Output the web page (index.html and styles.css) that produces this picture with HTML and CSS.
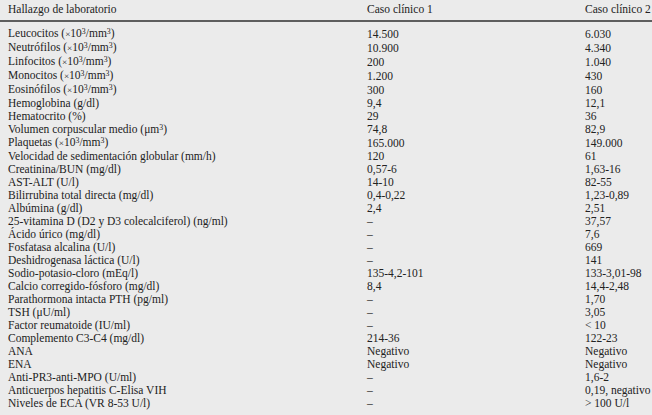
FILE: index.html
```html
<!DOCTYPE html>
<html lang="es">
<head>
<meta charset="utf-8">
<link rel="stylesheet" href="styles.css">
</head>
<body>
<table class="lab">
<colgroup><col class="c1"><col class="c2"><col class="c3"></colgroup>
<thead>
<tr><th>Hallazgo de laboratorio</th><th>Caso clínico 1</th><th>Caso clínico 2</th></tr>
</thead>
<tbody>
<tr class="first"><td>Leucocitos (<span class="x">×</span>10<sup>3</sup>/mm<sup>3</sup>)</td><td>14.500</td><td>6.030</td></tr>
<tr><td>Neutrófilos (<span class="x">×</span>10<sup>3</sup>/mm<sup>3</sup>)</td><td>10.900</td><td>4.340</td></tr>
<tr><td>Linfocitos (<span class="x">×</span>10<sup>3</sup>/mm<sup>3</sup>)</td><td>200</td><td>1.040</td></tr>
<tr><td>Monocitos (<span class="x">×</span>10<sup>3</sup>/mm<sup>3</sup>)</td><td>1.200</td><td>430</td></tr>
<tr><td>Eosinófilos (<span class="x">×</span>10<sup>3</sup>/mm<sup>3</sup>)</td><td>300</td><td>160</td></tr>
<tr><td>Hemoglobina (g/dl)</td><td>9,4</td><td>12,1</td></tr>
<tr><td>Hematocrito (%)</td><td>29</td><td>36</td></tr>
<tr><td>Volumen corpuscular medio (μm<sup>3</sup>)</td><td>74,8</td><td>82,9</td></tr>
<tr><td>Plaquetas (<span class="x">×</span>10<sup>3</sup>/mm<sup>3</sup>)</td><td>165.000</td><td>149.000</td></tr>
<tr><td>Velocidad de sedimentación globular (mm/h)</td><td>120</td><td>61</td></tr>
<tr><td>Creatinina/BUN (mg/dl)</td><td>0,57-6</td><td>1,63-16</td></tr>
<tr><td>AST-ALT (U/l)</td><td>14-10</td><td>82-55</td></tr>
<tr><td>Bilirrubina total directa (mg/dl)</td><td>0,4-0,22</td><td>1,23-0,89</td></tr>
<tr><td>Albúmina (g/dl)</td><td>2,4</td><td>2,51</td></tr>
<tr><td>25-vitamina D (D2 y D3 colecalciferol) (ng/ml)</td><td>–</td><td>37,57</td></tr>
<tr><td>Ácido úrico (mg/dl)</td><td>–</td><td>7,6</td></tr>
<tr><td>Fosfatasa alcalina (U/l)</td><td>–</td><td>669</td></tr>
<tr><td>Deshidrogenasa láctica (U/l)</td><td>–</td><td>141</td></tr>
<tr><td>Sodio-potasio-cloro (mEq/l)</td><td>135-4,2-101</td><td>133-3,01-98</td></tr>
<tr><td>Calcio corregido-fósforo (mg/dl)</td><td>8,4</td><td>14,4-2,48</td></tr>
<tr><td>Parathormona intacta PTH (pg/ml)</td><td>–</td><td>1,70</td></tr>
<tr><td>TSH (μU/ml)</td><td>–</td><td>3,05</td></tr>
<tr><td>Factor reumatoide (IU/ml)</td><td>–</td><td>&lt; 10</td></tr>
<tr><td>Complemento C3-C4 (mg/dl)</td><td>214-36</td><td>122-23</td></tr>
<tr><td>ANA</td><td>Negativo</td><td>Negativo</td></tr>
<tr><td>ENA</td><td>Negativo</td><td>Negativo</td></tr>
<tr><td>Anti-PR3-anti-MPO (U/ml)</td><td>–</td><td>1,6-2</td></tr>
<tr><td>Anticuerpos hepatitis C-Elisa VIH</td><td>–</td><td>0,19, negativo</td></tr>
<tr class="last"><td>Niveles de ECA (VR 8-53 U/l)</td><td>–</td><td>&gt; 100 U/l</td></tr>
</tbody>
</table>
</body>
</html>
```
FILE: styles.css
```css
html, body {
  margin: 0;
  padding: 0;
  background: #ebebeb;
}
body {
  width: 652px;
  height: 415px;
  overflow: hidden;
}
.lab {
  width: 652px;
  border-collapse: collapse;
  table-layout: fixed;
  font-family: "Liberation Serif", "DejaVu Serif", serif;
  font-size: 11.5px;
  color: #222222;
}
.c1 { width: 367px; }
.c2 { width: 218px; }
.c3 { width: 67px; }
.lab th {
  font-weight: normal;
  text-align: left;
  padding: 3px 0 5px 0;
  height: 12px;
  line-height: 12px;
  border-bottom: 2px solid #5e5e5e;
  white-space: nowrap;
}
.lab td {
  padding: 0;
  height: 13px;
  line-height: 13px;
  white-space: nowrap;
  vertical-align: middle;
}
.lab th:first-child,
.lab td:first-child {
  padding-left: 8px;
}
.lab tr.first td {
  padding-top: 5px;
}
.lab tr.last td {
  padding-bottom: 5px;
  border-bottom: 2px solid #4a4a4a;
}
sup {
  font-size: 0.68em;
  line-height: 0;
  vertical-align: 0.42em;
}
.x {
  font-size: 0.8em;
}
```
